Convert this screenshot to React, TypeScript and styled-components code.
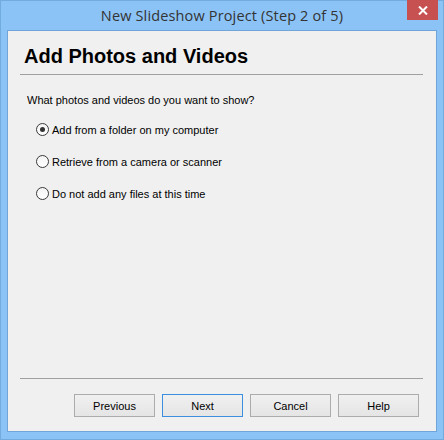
import React, { useState } from "react";
import styled, { createGlobalStyle } from "styled-components";

const GlobalStyle = createGlobalStyle`
  html, body {
    margin: 0;
    padding: 0;
    background: #8cc3f6;
  }
  body {
    font-family: "Liberation Sans", Arial, sans-serif;
  }
`;

const Window = styled.div`
  box-sizing: border-box;
  width: 444px;
  height: 440px;
  display: flex;
  flex-direction: column;
  background: #8cc3f6;
  border: 1px solid #72acdf;
`;

const TitleBar = styled.div`
  height: 29px;
  display: grid;
  grid-template-columns: 1fr auto 1fr;
  align-items: start;
`;

const Title = styled.div`
  grid-column: 2;
  padding-top: 5px;
  font-family: "Open Sans", "Noto Sans", sans-serif;
  font-size: 14.5px;
  line-height: 20px;
  color: #333333;
  letter-spacing: 0.15px;
`;

const CloseButton = styled.div`
  grid-column: 3;
  justify-self: end;
  margin-right: 5px;
  width: 31px;
  height: 20px;
  margin-top: -1px;
  background: #c75050;
  display: flex;
  align-items: center;
  justify-content: center;
`;

const Client = styled.div`
  flex: 1;
  margin: 0 6px 7px;
  border: 1px solid #6fa5d8;
  background: #f0f0f0;
  display: flex;
  flex-direction: column;
`;

const Header = styled.h1`
  margin: 0;
  padding: 13px 16px 0;
  height: 30px;
  font-family: "Liberation Sans", Arial, sans-serif;
  font-weight: bold;
  font-size: 20px;
  line-height: 24px;
  color: #000;
`;

const Rule = styled.div`
  height: 1px;
  margin: 0 13px 0 12px;
  background: #a0a0a0;
`;

const Body = styled.div`
  flex: 1;
  padding: 19px 19px 0;
  display: flex;
  flex-direction: column;
`;

const Question = styled.div`
  font-size: 11px;
  line-height: 13px;
  color: #000;
  margin-bottom: 16px;
`;

const Options = styled.div`
  display: flex;
  flex-direction: column;
  gap: 19px;
  padding-left: 9px;
`;

const OptionRow = styled.label`
  display: flex;
  align-items: center;
  gap: 3px;
  height: 13px;
  font-size: 11px;
  color: #000;
  cursor: default;
`;

const Radio = styled.span<{ $checked: boolean }>`
  box-sizing: border-box;
  width: 13px;
  height: 13px;
  border-radius: 50%;
  border: 1px solid #3a3a3a;
  background: linear-gradient(#f4f4f4, #ffffff);
  display: flex;
  align-items: center;
  justify-content: center;

  &::after {
    content: "";
    width: 5px;
    height: 5px;
    border-radius: 50%;
    background: #333333;
    display: ${(p) => (p.$checked ? "block" : "none")};
  }
`;

const Footer = styled.div`
  display: flex;
  flex-direction: column;
`;

const ButtonRow = styled.div`
  display: flex;
  justify-content: flex-end;
  gap: 7px;
  padding: 15px 17px 14px;
`;

const DialogButton = styled.button<{ $default?: boolean }>`
  box-sizing: border-box;
  width: 81px;
  height: 23px;
  padding: 0;
  font-family: "Liberation Sans", Arial, sans-serif;
  font-size: 11px;
  color: #000;
  background: linear-gradient(#f0f0f0, #e5e5e5);
  border: 1px solid ${(p) => (p.$default ? "#3c8fe0" : "#acacac")};
`;

const options = [
  "Add from a folder on my computer",
  "Retrieve from a camera or scanner",
  "Do not add any files at this time",
];

export default function App() {
  const [selected, setSelected] = useState(0);

  return (
    <>
      <GlobalStyle />
      <Window>
        <TitleBar>
          <Title>New Slideshow Project (Step 2 of 5)</Title>
          <CloseButton>
            <svg width="10" height="9" viewBox="0 0 10 9">
              <path d="M1 0.5 L9 8.5 M9 0.5 L1 8.5" stroke="#fff" strokeWidth="2" />
            </svg>
          </CloseButton>
        </TitleBar>
        <Client>
          <Header>Add Photos and Videos</Header>
          <Rule />
          <Body>
            <Question>What photos and videos do you want to show?</Question>
            <Options>
              {options.map((label, i) => (
                <OptionRow key={label} onClick={() => setSelected(i)}>
                  <Radio $checked={selected === i} />
                  {label}
                </OptionRow>
              ))}
            </Options>
          </Body>
          <Footer>
            <Rule />
            <ButtonRow>
              <DialogButton>Previous</DialogButton>
              <DialogButton $default>Next</DialogButton>
              <DialogButton>Cancel</DialogButton>
              <DialogButton>Help</DialogButton>
            </ButtonRow>
          </Footer>
        </Client>
      </Window>
    </>
  );
}
